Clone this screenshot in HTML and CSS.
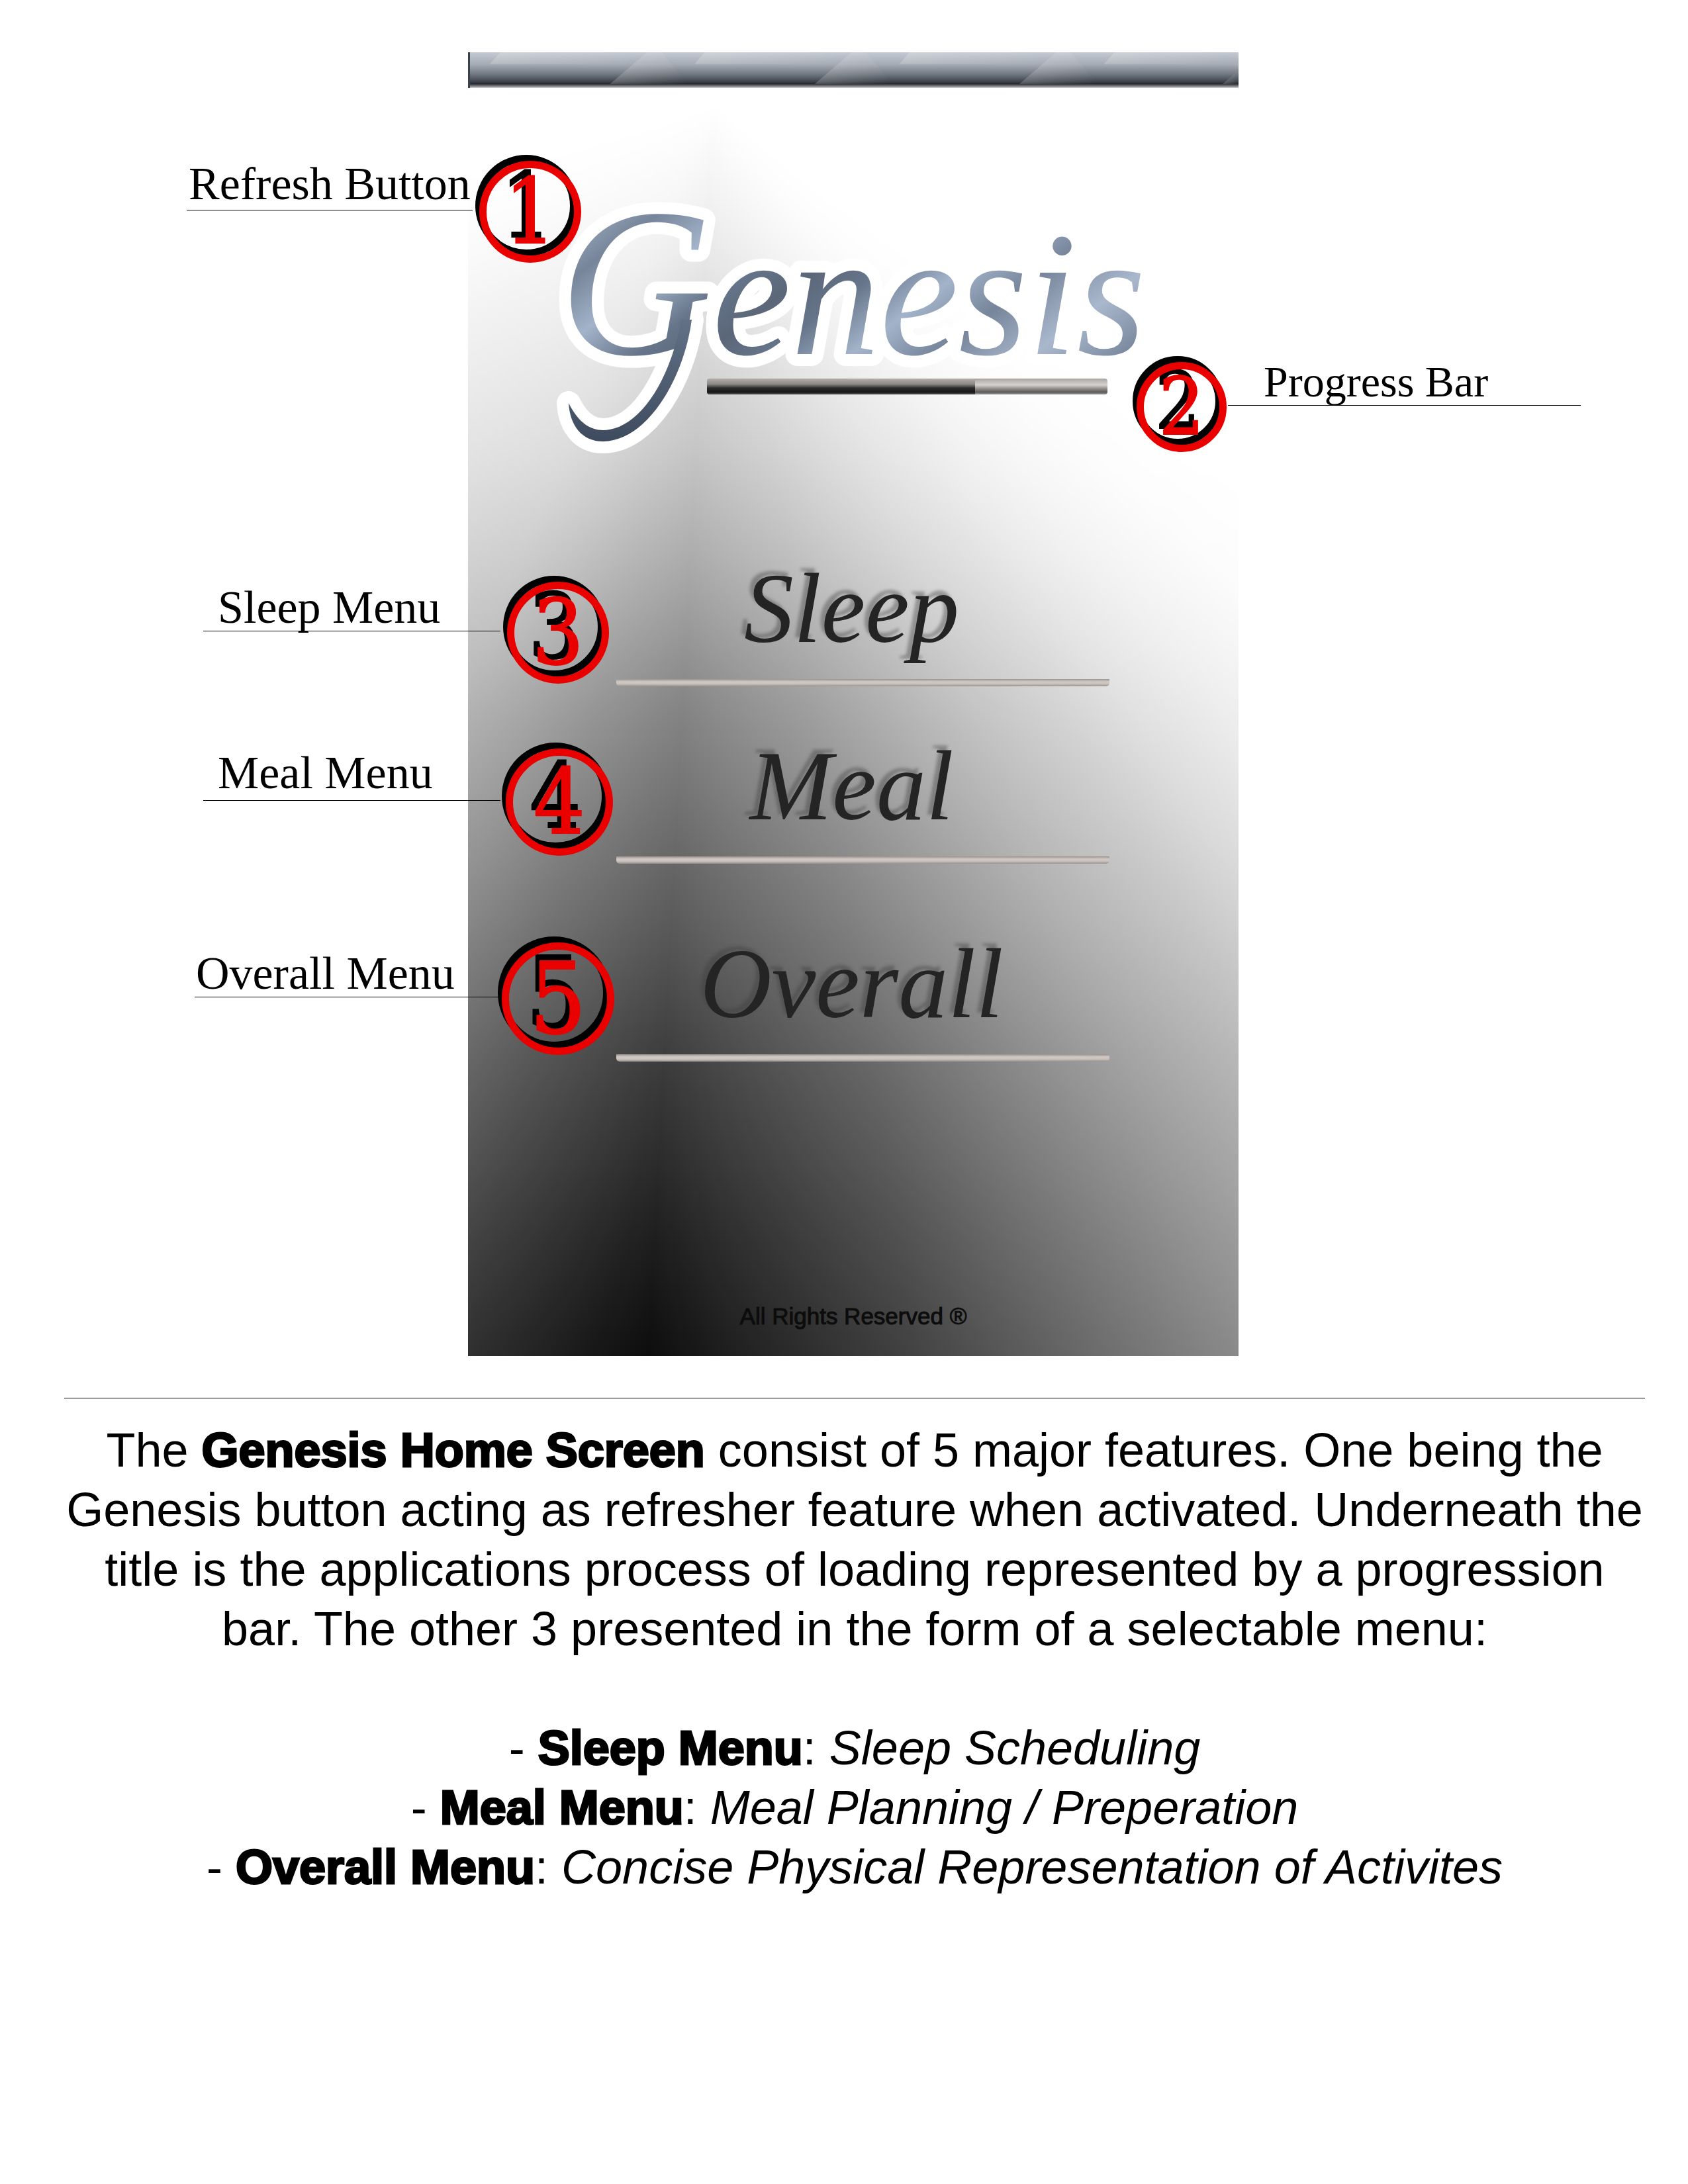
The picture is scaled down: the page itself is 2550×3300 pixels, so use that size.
FILE: index.html
```html
<!DOCTYPE html>
<html lang="en">
<head>
<meta charset="utf-8">
<meta name="viewport" content="width=device-width, initial-scale=1">
<title>Genesis Home Screen</title>
<link rel="stylesheet" href="styles.css">
</head>
<body>
<main class="page">
  <section class="stage">
    <div class="phone">
      <div class="phone-bar">
        <svg viewBox="0 0 1164 54" preserveAspectRatio="none" aria-hidden="true">
          <defs>
            <linearGradient id="glint">
              <stop offset="0" stop-color="#fff" stop-opacity=".2"/>
              <stop offset="1" stop-color="#fff" stop-opacity="0"/>
            </linearGradient>
          </defs>
          <g fill="url(#glint)">
            <path d="M212 54L268 0H290L330 54Z"/>
            <path d="M522 54L578 0H600L640 54Z"/>
            <path d="M832 54L888 0H910L950 54Z"/>
            <path d="M1140 54L1164 30V54Z"/>
            <path d="M30 20L46 0H250L236 20Z"/>
            <path d="M340 20L356 0H560L546 20Z"/>
            <path d="M650 20L666 0H870L856 20Z"/>
            <path d="M960 20L976 0H1150L1140 20Z"/>
          </g>
        </svg>
      </div>
      <button class="logo" type="button">
        <svg viewBox="0 0 1164 439">
          <defs>
            <linearGradient id="steel" x1="150" y1="180" x2="330" y2="420" gradientUnits="userSpaceOnUse" spreadMethod="reflect">
              <stop offset="0" stop-color="#a9b8cd"/>
              <stop offset=".3" stop-color="#76859a"/>
              <stop offset=".55" stop-color="#a3b3c9"/>
              <stop offset=".8" stop-color="#66758a"/>
              <stop offset="1" stop-color="#5b6779"/>
            </linearGradient>
            <linearGradient id="tail" x1="0" y1="330" x2="0" y2="540" gradientUnits="userSpaceOnUse">
              <stop offset="0" stop-color="#66758a"/>
              <stop offset="1" stop-color="#3d4a5e"/>
            </linearGradient>
          </defs>
          <path class="tail-edge" d="M338 350C326 440 270 534 204 534C172 534 154 510 152 476C170 512 192 520 214 516C262 508 306 440 322 350Z"/>
          <text class="logo-text" x="138" y="402"><tspan class="logo-initial">G</tspan>enesis</text>
          <path fill="url(#tail)" d="M338 350C326 440 270 534 204 534C172 534 154 510 152 476C170 512 192 520 214 516C262 508 306 440 322 350Z"/>
        </svg>
      </button>
      <progress class="loading" max="100" value="67" aria-label="Loading"></progress>
      <nav class="menu">
        <a class="menu-item" href="#sleep">Sleep</a>
        <a class="menu-item" href="#meal">Meal</a>
        <a class="menu-item" href="#overall">Overall</a>
      </nav>
      <p class="rights">All Rights Reserved ®</p>
    </div>

    <div class="notes notes-left">
      <div class="note note-refresh"><span class="label">Refresh Button</span><span class="badge">1</span></div>
      <div class="note note-sleep"><span class="label">Sleep Menu</span><span class="badge">3</span></div>
      <div class="note note-meal"><span class="label">Meal Menu</span><span class="badge">4</span></div>
      <div class="note note-overall"><span class="label">Overall Menu</span><span class="badge">5</span></div>
    </div>
    <div class="notes notes-right">
      <div class="note note-progress"><span class="badge">2</span><span class="label">Progress Bar</span></div>
    </div>
  </section>

  <section class="about">
    <p>The <strong>Genesis Home Screen</strong> consist of 5 major features. One being the Genesis button acting as refresher feature when activated. Underneath the title is the applications process of loading represented by a progression bar. The other 3 presented in the form of a selectable menu:</p>
    <ul>
      <li id="sleep">- <strong>Sleep Menu</strong>: <em>Sleep Scheduling</em></li>
      <li id="meal">- <strong>Meal Menu</strong>: <em>Meal Planning / Preperation</em></li>
      <li id="overall">- <strong>Overall Menu</strong>: <em>Concise Physical Representation of Activites</em></li>
    </ul>
  </section>
</main>
</body>
</html>
```
FILE: styles.css
```css
* {
  box-sizing: border-box;
}

body {
  margin: 0;
  background: #fff;
  color: #000;
}

.page {
  padding-top: 79px;
}

/* Annotated screen */
.stage {
  display: grid;
  grid-template-columns: 707fr 1164fr 679fr;
}

.phone {
  grid-column: 2;
  grid-row: 1;
  position: relative;
  isolation: isolate;
  display: flex;
  flex-direction: column;
  padding-bottom: 40px;
}

/* Dark ridge fading out to both sides, darker toward the bottom */
.phone::before {
  content: "";
  position: absolute;
  inset: 0;
  z-index: -1;
  background: linear-gradient(
    rgba(0, 0, 0, 0) 4%,
    rgba(0, 0, 0, .05) 11%,
    rgba(0, 0, 0, .14) 21%,
    rgba(0, 0, 0, .23) 31%,
    rgba(0, 0, 0, .33) 39%,
    rgba(0, 0, 0, .48) 50%,
    rgba(0, 0, 0, .64) 66%,
    rgba(0, 0, 0, .76) 77%,
    rgba(0, 0, 0, .89) 92%,
    rgba(0, 0, 0, .95) 100%);
  mask-image: conic-gradient(at 32% 71px,
    transparent 126deg,
    rgba(0, 0, 0, .04) 133deg,
    rgba(0, 0, 0, .14) 140deg,
    rgba(0, 0, 0, .25) 146deg,
    rgba(0, 0, 0, .34) 150deg,
    rgba(0, 0, 0, .48) 157deg,
    rgba(0, 0, 0, .78) 171deg,
    rgba(0, 0, 0, .94) 180deg,
    #000 183deg,
    rgba(0, 0, 0, .97) 185deg,
    rgba(0, 0, 0, .86) 191deg,
    rgba(0, 0, 0, .72) 197deg,
    rgba(0, 0, 0, .6) 203deg,
    rgba(0, 0, 0, .53) 210deg,
    rgba(0, 0, 0, .38) 227deg,
    rgba(0, 0, 0, .16) 242deg,
    transparent 256deg);
}

.phone-bar {
  height: 54px;
  border-left: 3px solid #3a4148;
  background: linear-gradient(#c4cad3, #a4aab3 35%, #70767f 62%, #3e444d 82%, #25282e 88%, #8d8f92 96%, #d8d8d8);
}

.phone-bar svg {
  display: block;
  width: 100%;
  height: 48px;
}

.logo {
  padding: 0;
  border: 0;
  background: none;
  cursor: pointer;
}

.logo svg {
  display: block;
  width: 100%;
  overflow: visible;
}

.logo-text {
  font: italic 268px "Liberation Serif", "Times New Roman", serif;
  fill: url(#steel);
  stroke: #fff;
  stroke-width: 36px;
  stroke-linejoin: round;
  paint-order: stroke;
}

.logo-initial {
  font-size: 320px;
}

.tail-edge {
  fill: #fff;
  stroke: #fff;
  stroke-width: 36px;
  stroke-linejoin: round;
}

.loading {
  appearance: none;
  display: block;
  width: 52%;
  height: 24px;
  margin-left: 31%;
  border: 0;
  border-radius: 4px;
  overflow: hidden;
  background: none;
}

.loading::-webkit-progress-bar {
  background: linear-gradient(#a8a4a2, #d6d2d0 40%, #8f8b89 65%, #5d5a58 85%, #9a9a9a);
}

.loading::-webkit-progress-value {
  background: linear-gradient(#b4aeab, #8c8886 35%, #2a2a2a 60%, #161616 85%, #555);
}

.menu {
  display: flex;
  flex-direction: column;
  width: 64%;
  margin: 251px 0 0 224px;
}

.menu-item {
  padding: 12px 34px 58px 0;
  background: linear-gradient(#99918c, #cfc8c4 35%, #cbc3be 65%, #99918c) bottom / 100% 11px no-repeat;
  border-radius: 5px;
  font: italic 150px/120px "Liberation Serif", "Times New Roman", serif;
  text-align: center;
  text-decoration: none;
  text-shadow: -6px -7px 4px rgba(60, 60, 60, .4);
  color: #242424;
}

.menu-item:nth-child(2) {
  margin-top: 78px;
}

.menu-item:nth-child(3) {
  margin-top: 109px;
}

.rights {
  margin: 365px 0 0;
  font: 35px/40px "Liberation Sans", Arial, sans-serif;
  text-align: center;
  color: #0c0c0c;
  -webkit-text-stroke: 1px #0c0c0c;
}

/* Numbered notes */
.notes {
  grid-row: 1;
  z-index: 1;
  display: flex;
  flex-direction: column;
  pointer-events: none;
}

.notes-left {
  grid-column: 1 / 3;
  padding-top: 164px;
}

.notes-right {
  grid-column: 2 / 4;
  padding-top: 468px;
}

.note {
  display: flex;
  gap: 10px;
  height: var(--size);
}

.label {
  display: flex;
  align-items: flex-end;
  height: calc(var(--size) / 2 - 2px);
  border-bottom: 1px solid #000;
  font: 70px/70px "Liberation Serif", "Times New Roman", serif;
  white-space: nowrap;
}

.badge {
  display: flex;
  align-items: center;
  justify-content: center;
  width: var(--size);
  height: var(--size);
  border: 11px solid #eb0000;
  border-radius: 50%;
  font: 136px/1 "DejaVu Serif Condensed", "DejaVu Serif", serif;
  color: #eb0000;
  -webkit-text-stroke: 2px #eb0000;
  filter: drop-shadow(-6px -9px 0 #000);
}

.note-refresh {
  --size: 154px;
  margin-left: 282px;
}

.note-refresh .label {
  width: 432px;
  padding: 0 0 4px 3px;
}

.note-sleep {
  --size: 154px;
  margin: 482px 0 0 307px;
}

.note-meal {
  --size: 162px;
  gap: 8px;
  margin: 98px 0 0 307px;
}

.note-sleep .label,
.note-meal .label {
  width: 449px;
  padding-left: 22px;
}

.note-meal .label {
  padding-bottom: 6px;
}

.note-overall {
  --size: 170px;
  gap: 0;
  margin: 131px 0 0 294px;
}

.note-overall .label {
  width: 464px;
  padding-left: 2px;
}

.note-overall .badge {
  font-size: 150px;
}

.note-progress {
  --size: 136px;
  gap: 2px;
  margin-left: 1010px;
}

.note-progress .badge {
  font-size: 120px;
}

.note-progress .label {
  width: 533px;
  padding-left: 54px;
  font-size: 66px;
}

/* Description */
.about {
  margin: 63px 65px 0 97px;
  padding-top: 33px;
  border-top: 1px solid #000;
  font: 72px/90px "Liberation Sans", Arial, sans-serif;
  text-align: center;
}

.about p {
  margin: 0 0 90px;
}

.about ul {
  margin: 0;
  padding: 0;
  list-style: none;
}

.about strong {
  -webkit-text-stroke: 3px #000;
}
```
